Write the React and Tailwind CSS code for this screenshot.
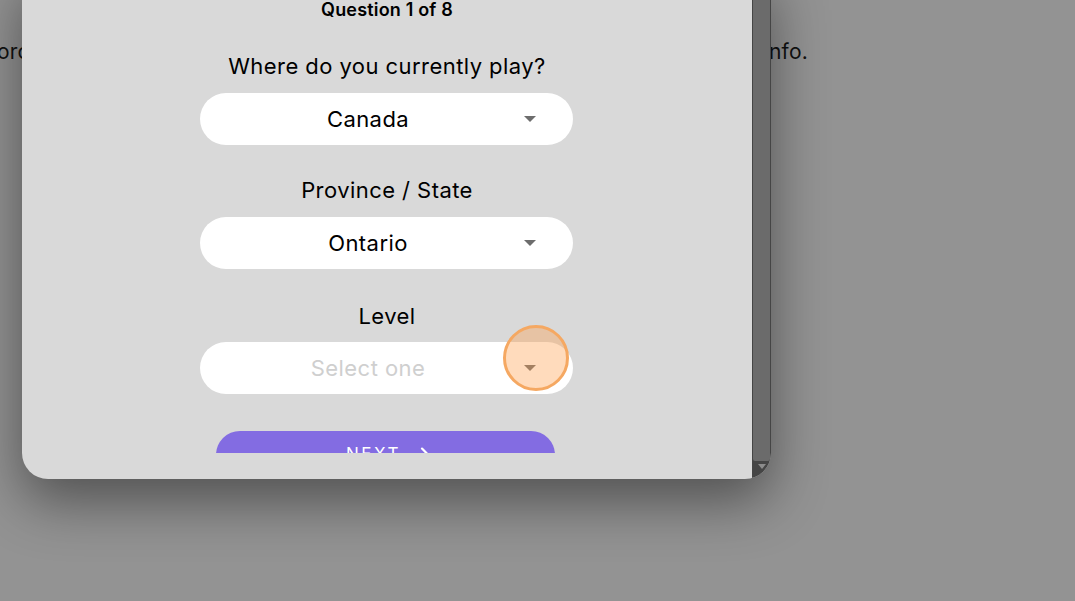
import React from "react";
import { ArrowRight } from "lucide-react";

function Caret() {
  return (
    <svg width="12" height="6" viewBox="0 0 12 6" className="absolute right-[37px] top-[23px]">
      <path d="M0 0 L12 0 L6 6 Z" fill="#6d6d6d" />
    </svg>
  );
}

function SelectBox({ value, placeholder }) {
  return (
    <div className="relative ml-[178px] mt-[13px] flex h-[52px] w-[373px] items-center rounded-full bg-white pr-[37px]">
      <span
        className={
          "w-full text-center text-[22px] leading-[28px] tracking-[0.02em] " +
          (placeholder ? "text-[#cfcfcf]" : "text-black")
        }
      >
        {value}
      </span>
      <Caret />
    </div>
  );
}

export default function App() {
  return (
    <div
      className="relative h-[601px] w-[1075px] overflow-hidden bg-[#939393]"
      style={{ fontFamily: "Inter, 'Noto Sans', sans-serif" }}
    >
      {/* background page text */}
      <div className="flex pt-[38px] text-[21px] leading-[28px] tracking-[0.01em] text-[#111]">
        <div className="w-[22px] overflow-hidden whitespace-nowrap">
          <span className="ml-[-3px] inline-block">orc</span>
        </div>
        <div className="w-[749px]" />
        <div className="overflow-hidden whitespace-nowrap">
          <span className="ml-[-2px] inline-block">nfo.</span>
        </div>
      </div>

      {/* modal */}
      <div className="absolute left-[22px] top-[-30px] flex h-[509px] w-[749px] overflow-hidden rounded-b-[26px] bg-[#d9d9d9] shadow-[0_22px_55px_rgba(0,0,0,0.45)]">
        <div className="flex flex-1 flex-col">
          <div className="h-[483px] overflow-hidden pt-[28px] text-center text-black">
            <div className="text-[18px] font-semibold leading-[24px] tracking-[0.01em]">Question 1 of 8</div>

            <div className="mt-[30px] text-[22px] leading-[28px] tracking-[0.02em]">Where do you currently play?</div>
            <SelectBox value="Canada" />

            <div className="mt-[31px] text-[22px] leading-[28px] tracking-[0.02em]">Province / State</div>
            <SelectBox value="Ontario" />

            <div className="mt-[33px] text-[22px] leading-[28px] tracking-[0.02em]">Level</div>
            <div className="mt-[-1px]" />
            <SelectBox value="Select one" placeholder />

            <button className="ml-[194px] mt-[37px] flex h-[48px] w-[339px] items-center justify-center gap-[10px] rounded-full bg-[#836ce2] pl-[8px] text-[17px] tracking-[0.15em] text-white">
              <span>NEXT</span>
              <ArrowRight size={22} strokeWidth={2.4} />
            </button>
          </div>
          <div className="h-[26px]" />
        </div>

        {/* scrollbar */}
        <div className="flex w-[19px] flex-col bg-[#454545] px-[1px]">
          <div className="flex-1 rounded-b-[2px] bg-[#6b6b6b]" />
          <div className="flex h-[11px] items-center justify-center">
            <svg width="8" height="5" viewBox="0 0 8 5">
              <path d="M0 0 L8 0 L4 5 Z" fill="#8c8c8c" />
            </svg>
          </div>
          <div className="h-[7px]" />
        </div>
      </div>

      {/* click indicator */}
      <div className="absolute left-[503px] top-[325px] h-[66px] w-[66px] rounded-full border-[3px] border-[#f5a862] bg-[rgba(255,160,80,0.38)]" />
    </div>
  );
}
